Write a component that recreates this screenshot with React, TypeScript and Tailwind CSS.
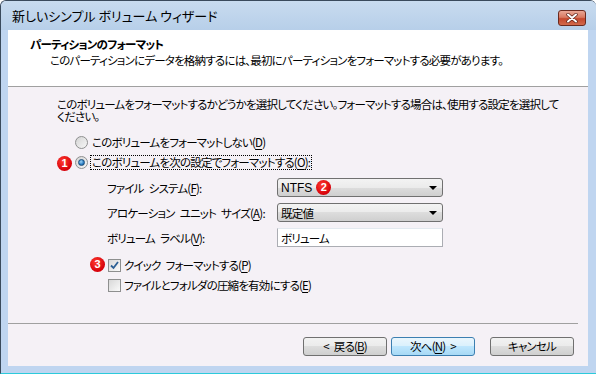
import type { ReactNode } from 'react'

const jp = "font-['Noto_Sans_CJK_JP',sans-serif] [font-feature-settings:'palt']"

function Badge({ n, className = '' }: { n: number; className?: string }) {
  return (
    <span
      className={`flex h-[15px] w-[15px] items-center justify-center rounded-full bg-[radial-gradient(circle_at_40%_35%,#ff3b2f,#d6000a_70%)] font-['Liberation_Sans',sans-serif] text-[11px] font-bold leading-none tracking-normal text-white ${className}`}
    >
      {n}
    </span>
  )
}

function Radio({ checked }: { checked?: boolean }) {
  return (
    <span className="flex h-[13px] w-[13px] shrink-0 items-center justify-center rounded-full border border-[#8e8f8f] bg-[linear-gradient(135deg,#d4d4d4,#f7f7f7)]">
      {checked && (
        <span className="h-[7px] w-[7px] rounded-full border border-[#1a4d7a] bg-[radial-gradient(circle_at_40%_35%,#9fd4f5,#2a7cc2_60%,#134f86)]" />
      )}
    </span>
  )
}

function Check({ checked }: { checked?: boolean }) {
  return (
    <span className="flex h-[13px] w-[13px] shrink-0 items-center justify-center border border-[#8e8f8f] bg-[linear-gradient(135deg,#d8d8d8,#fafafa)]">
      {checked && (
        <svg width="9" height="9" viewBox="0 0 9 9">
          <path d="M1 4.5 L3.5 7 L8 1" fill="none" stroke="#2b5f94" strokeWidth="1.8" />
        </svg>
      )}
    </span>
  )
}

function U({ children }: { children: ReactNode }) {
  return <span className="underline underline-offset-2">{children}</span>
}

// MS UI Gothic style wide space
function S() {
  return <span className="inline-block w-[5px]" />
}

function Select({ children }: { children: ReactNode }) {
  return (
    <div className="flex h-[19px] w-[166px] items-center justify-between rounded-[3px] border border-[#707070] bg-[linear-gradient(#f3f3f3_0%,#ebebeb_50%,#dddddd_50%,#cfcfcf_100%)] pl-[3px] pr-[5px]">
      <div className="flex items-center">{children}</div>
      <span className="h-0 w-0 border-x-[4px] border-t-[4px] border-x-transparent border-t-black" />
    </div>
  )
}

function Button({ children, primary }: { children: ReactNode; primary?: boolean }) {
  return (
    <div
      className={`flex h-[19px] w-[84px] items-center justify-center rounded-[3px] border leading-none ${
        primary
          ? 'border-[#3c7fb1] bg-[linear-gradient(#eaf6fd_0%,#d9f0fc_50%,#bee6fd_50%,#a7d9f5_100%)]'
          : 'border-[#707070] bg-[linear-gradient(#f2f2f2_0%,#ebebeb_50%,#dddddd_50%,#cfcfcf_100%)]'
      }`}
    >
      {children}
    </div>
  )
}

export default function App() {
  return (
    <div className={`flex h-[374px] w-[596px] flex-col overflow-hidden rounded-t-[6px] border-l border-t border-b border-[#3a4a5c] border-b-[#2ccadb] bg-[#bfd5f0] text-black ${jp}`}>
      <div className="flex h-[29px] items-start justify-between bg-[linear-gradient(#c8dbef,#b7cfe9)] pl-[11px] pr-[10px]">
        <span className="mt-[8px] whitespace-nowrap text-[13px] leading-[14px]">新しいシンプル ボリューム ウィザード</span>
        <div className="mt-[9px] flex h-[16px] w-[28px] items-center justify-center rounded-[3px] border border-[#6b2a1e] bg-[linear-gradient(#e9a795_0%,#d97a62_45%,#c4482d_55%,#d26a4c_100%)]">
          <svg width="12" height="10" viewBox="0 0 12 10">
            <path d="M2 1.5 L10 8.5 M10 1.5 L2 8.5" stroke="#5a2218" strokeWidth="3.4" strokeLinecap="round" />
            <path d="M2 1.5 L10 8.5 M10 1.5 L2 8.5" stroke="#ffffff" strokeWidth="2" strokeLinecap="round" />
          </svg>
        </div>
      </div>

      <div className="mx-[7px] mr-[8px] mb-[7px] flex flex-1 flex-col whitespace-nowrap bg-[#f5f1f6] text-[11.5px] tracking-[-0.8px]">
        <div className="h-[56px] bg-white pl-[22px] pt-[7px]">
          <div className="font-bold leading-[14px]">パーティションのフォーマット</div>
          <div className="mt-[2px] pl-[20px] leading-[14px]">
            このパーティションにデータを格納するには、最初にパーティションをフォーマットする必要があります。
          </div>
        </div>
        <div className="h-px bg-[#a0a0a0]" />

        <div className="flex flex-1 flex-col pl-[49px] pt-[11px] leading-[12px]">
          <div>
            このボリュームをフォーマットするかどうかを選択してください。フォーマットする場合は、使用する設定を選択して
            <br />
            ください。
          </div>

          <div className="mt-[12px] flex h-[16px] items-center pl-[18px]">
            <Radio />
            <span className="ml-[3px] px-px">このボリュームをフォーマットしない(<U>D</U>)</span>
          </div>

          <div className="relative mt-[4px] flex h-[16px] items-center pl-[18px]">
            <Badge n={1} className="absolute left-0 top-[2px]" />
            <Radio checked />
            <span className="ml-[2px] border border-dotted border-black px-px leading-[13px]">
              このボリュームを次の設定でフォーマットする(<U>O</U>):
            </span>
          </div>

          <div className="mt-[8px] flex items-center pl-[50px]">
            <span className="w-[170px]">ファイル<S />システム(<U>F</U>):</span>
            <Select>
              <span className="font-['Liberation_Sans',sans-serif] text-[12px] tracking-normal">NTFS</span>
              <Badge n={2} className="ml-[4px]" />
            </Select>
          </div>

          <div className="mt-[6px] flex items-center pl-[50px]">
            <span className="w-[170px]">アロケーション<S />ユニット<S />サイズ(<U>A</U>):</span>
            <Select>
              <span>既定値</span>
            </Select>
          </div>

          <div className="mt-[6px] flex items-center pl-[50px]">
            <span className="w-[170px]">ボリューム<S />ラベル(<U>V</U>):</span>
            <div className="flex h-[19px] w-[166px] items-center border border-[#abadb3] border-t-[#e3e9ef] bg-white pl-[3px]">
              ボリューム
            </div>
          </div>

          <div className="relative mt-[10px] flex h-[16px] items-center pl-[51px]">
            <Badge n={3} className="absolute left-[33px] top-0" />
            <Check checked />
            <span className="ml-[3px]">クイック<S />フォーマットする(<U>P</U>)</span>
          </div>

          <div className="mt-[4px] flex h-[16px] items-center pl-[51px]">
            <Check />
            <span className="ml-[3px]">ファイルとフォルダの圧縮を有効にする(<U>E</U>)</span>
          </div>
        </div>

        <div className="mr-[10px] h-px bg-[#a0a0a0]" />
        <div className="flex h-[42px] items-start justify-end pr-[14px] pt-[13px]">
          <Button>&lt;<S />戻る(<U>B</U>)</Button>
          <div className="ml-[4px]">
            <Button primary>次へ(<U>N</U>)<S />&gt;</Button>
          </div>
          <div className="ml-[15px]">
            <Button>キャンセル</Button>
          </div>
        </div>
      </div>
    </div>
  )
}
